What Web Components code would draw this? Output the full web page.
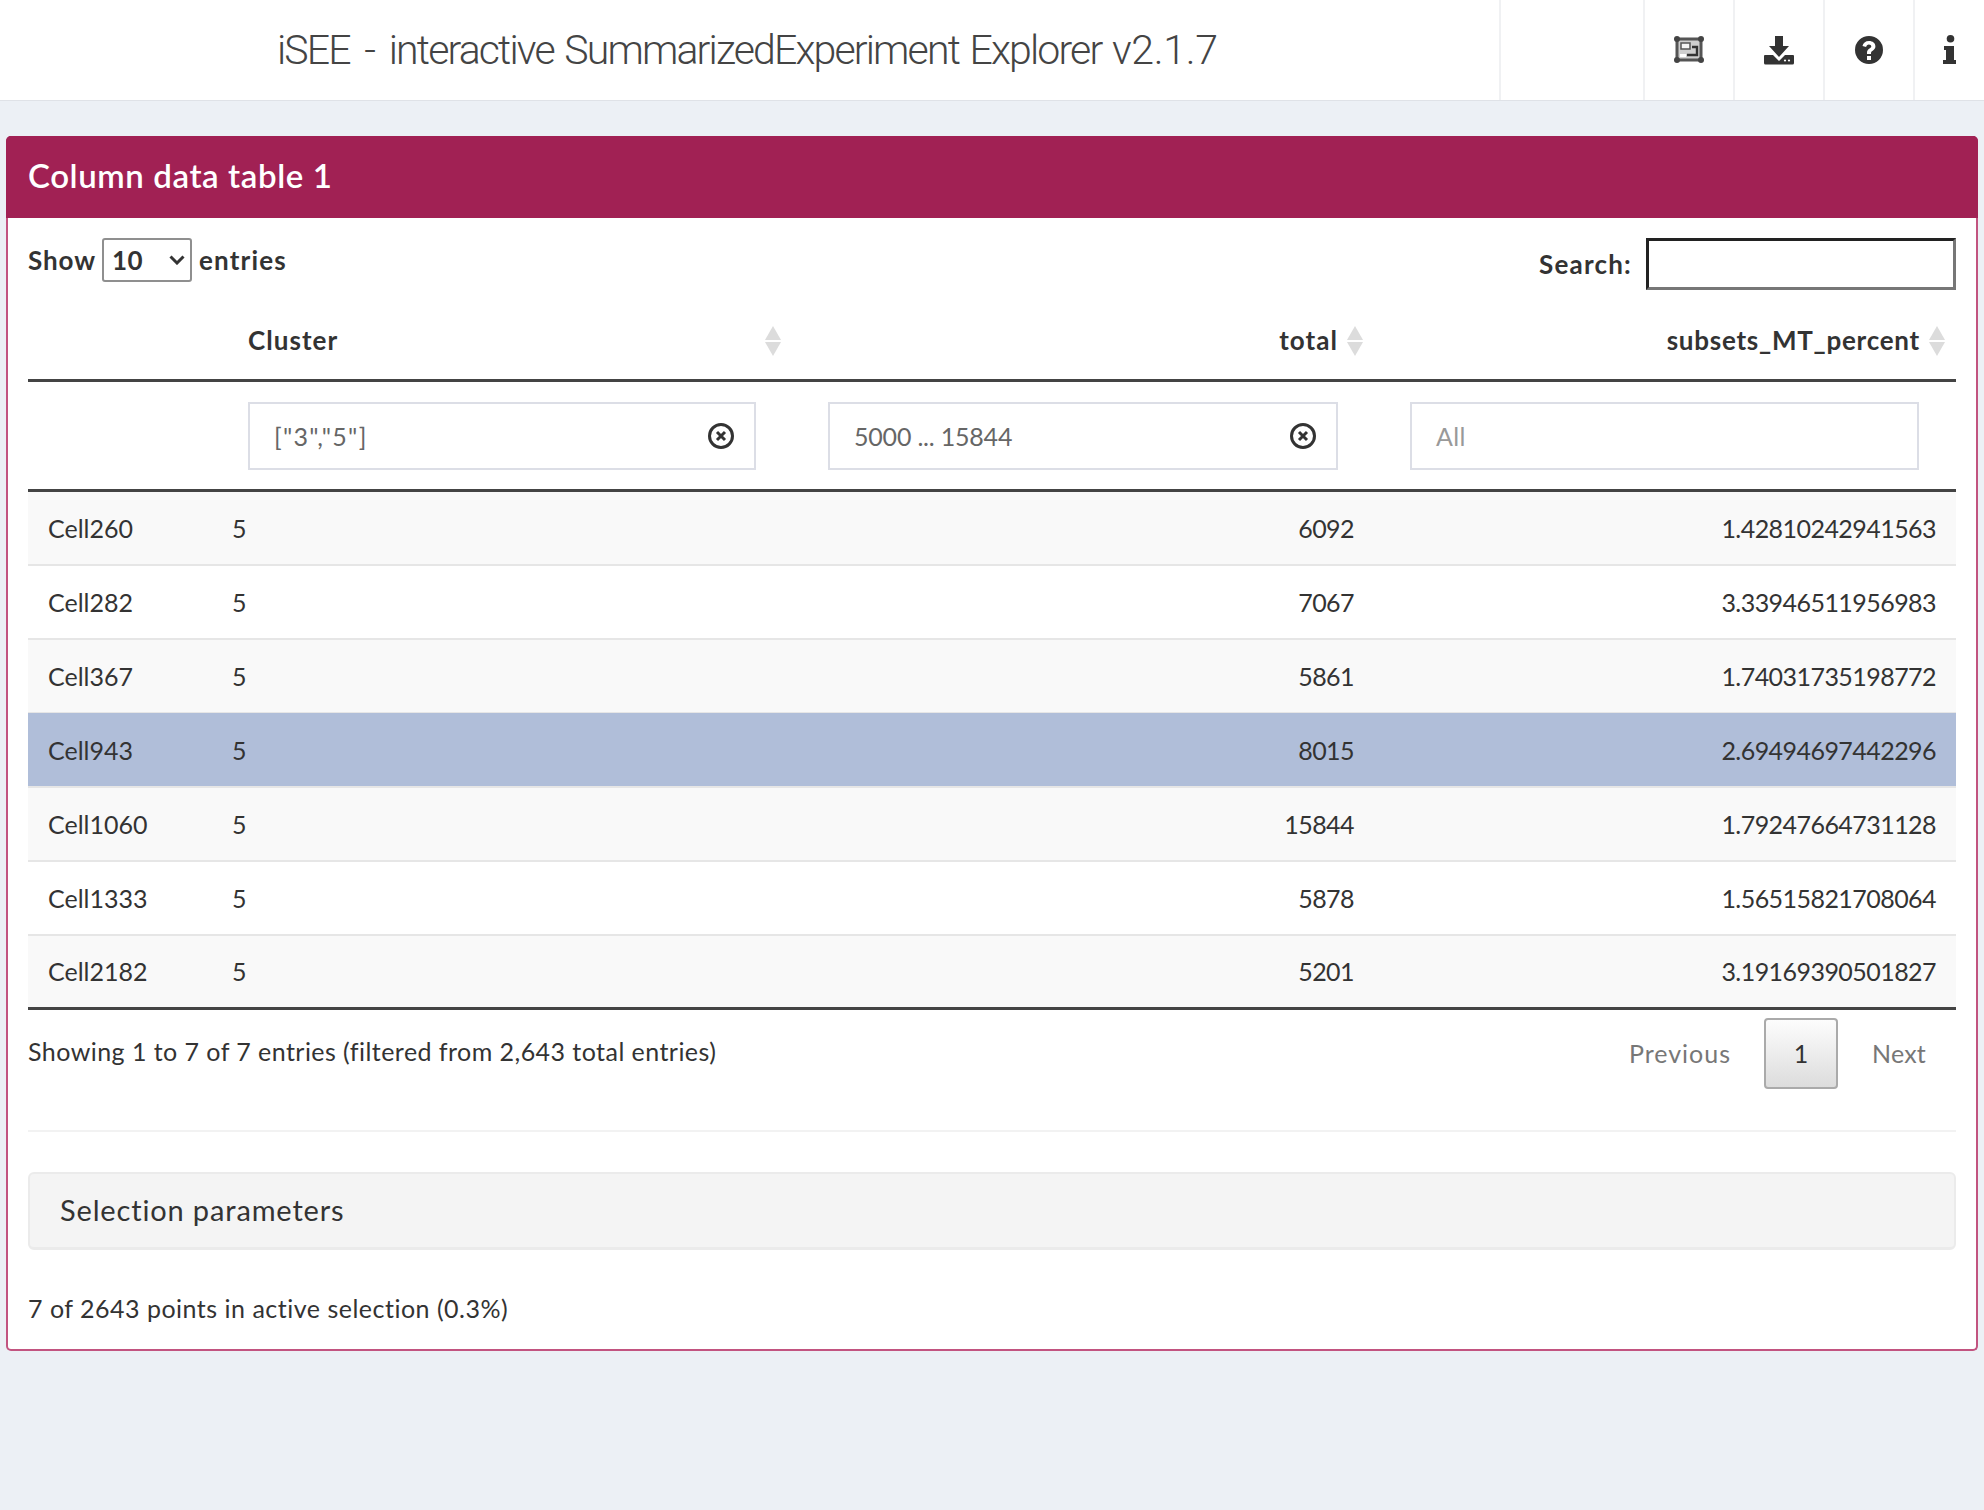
<!DOCTYPE html>
<html>
<head>
<meta charset="utf-8">
<title>iSEE</title>
<style>
  html, body { margin: 0; height: 100%; }
  body { background: #ecf0f5; font-family: "Lato", "Noto Sans", sans-serif; color: #333; }
</style>
</head>
<body>
<isee-header>iSEE <span style="margin:0 4px">-</span> interactive SummarizedExperiment Explorer <span style="letter-spacing:-.3px">v2.1.7</span></isee-header>
<isee-box heading="Column data table 1">
  <dt-controls></dt-controls>
  <dt-table></dt-table>
  <dt-footer></dt-footer>
  <isee-collapse label="Selection parameters"></isee-collapse>
  <p slot="note">7 of 2643 points in active selection (0.3%)</p>
</isee-box>

<script>
const FONT = `"Lato", "Noto Sans", sans-serif`;

// top bar
class IseeHeader extends HTMLElement {
  constructor() {
    super();
    this.attachShadow({ mode: "open" }).innerHTML = `
    <style>
      :host { display: flex; height: 100px; background: #fff; border-bottom: 1px solid #dfe2e7; box-sizing: content-box; }
      .title { flex: 1; padding-left: 277px; font: 300 41px/100px Roboto, sans-serif; letter-spacing: -1.85px; word-spacing: 2.4px; color: #444; white-space: nowrap; }
      .cell { border-left: 2px solid #f0f1f3; box-sizing: border-box; display: flex; align-items: center; justify-content: center; padding-bottom: 1px; }
      svg { display: block; fill: #333; }
    </style>
    <div class="title"><slot></slot></div>
    <div class="cell" style="width:144px"></div>
    <div class="cell" style="width:90px">
      <svg width="30" height="27" viewBox="0 0 30 27">
        <rect x="3" y="3" width="24" height="21" fill="#cfcfcf" stroke="#555" stroke-width="3"/>
        <g fill="#444"><circle cx="3" cy="3" r="3"/><circle cx="27" cy="3" r="3"/><circle cx="3" cy="24" r="3"/><circle cx="27" cy="24" r="3"/></g>
        <path d="M7 7h9v6H7z" fill="#f4f4f4" stroke="#555" stroke-width="1.500"/>
        <path d="M13 19h10v-8h-5" fill="none" stroke="#333" stroke-width="2.400"/>
        <path d="M6 18h6v3H6z" fill="#fff"/>
      </svg>
    </div>
    <div class="cell" style="width:90px">
      <svg width="30" height="30" viewBox="0 0 30 30">
        <path d="M11 1h8v10h6l-10 11L5 11h6z"/>
        <path d="M1 20h8l6 6 6-6h8a1 1 0 0 1 1 1v7a1.500 1.500 0 0 1-1.500 1.500H1.500A1.500 1.500 0 0 1 0 28v-7a1 1 0 0 1 1-1z"/>
        <circle cx="21" cy="25.500" r="1.100" fill="#fff"/><circle cx="25" cy="25.500" r="1.100" fill="#fff"/>
      </svg>
    </div>
    <div class="cell" style="width:90px">
      <svg width="28" height="28" viewBox="0 0 28 28">
        <path fill-rule="evenodd" d="M14 0a14 14 0 1 1 0 28a14 14 0 0 1 0-28zM12 20v4h4v-4zM14 5c-3.600 0-6 2-6.500 5l3.600.9c.4-1.600 1.300-2.500 2.800-2.500 1.400 0 2.400.8 2.400 1.900 0 1-.7 1.500-1.800 2.200-1.500 1-2.500 2-2.500 4.200V18h4v-1c0-1 .5-1.500 1.700-2.300 1.700-1.100 2.700-2.400 2.700-4.400C20.400 7.100 17.700 5 14 5z"/>
      </svg>
    </div>
    <div class="cell" style="width:71px">
      <svg width="14" height="29" viewBox="0 0 14 29">
        <circle cx="7.500" cy="3.800" r="3.800"/>
        <path d="M1 11h10v14h2v4H0v-4h3v-10H1z"/>
      </svg>
    </div>`;
  }
}

// coloured box
class IseeBox extends HTMLElement {
  constructor() {
    super();
    this.attachShadow({ mode: "open" }).innerHTML = `
    <style>
      :host { display: block; margin: 35px 6px 0; background: #fff; border: 2px solid #c25480; border-top-color: #a12154; border-radius: 5px; box-sizing: border-box; height: 1215px; font-family: ${FONT}; }
      .head { background: #a12154; color: #fff; margin: -2px -2px 0; height: 82px; border-radius: 5px 5px 0 0; padding-left: 22px; font: 600 33px/78px ${FONT}; letter-spacing: .6px; }
      .body { padding: 20px 20px 0 20px; }
      ::slotted(p) { margin: 40px 0 0; font-size: 25px; line-height: 36px; letter-spacing: .5px; color: #333; }
    </style>
    <div class="head">${this.getAttribute("heading")}</div>
    <div class="body"><slot></slot><slot name="note"></slot></div>`;
  }
}

// show entries + search
class DtControls extends HTMLElement {
  constructor() {
    super();
    this.attachShadow({ mode: "open" }).innerHTML = `
    <style>
      :host { display: flex; justify-content: space-between; align-items: flex-start; height: 68px; font: 700 26px/44px ${FONT}; color: #333; letter-spacing: 1.2px; }
      .len { display: flex; align-items: center; gap: 6px; }
      .show { letter-spacing: .9px; }
      .sel { width: 90px; height: 44px; box-sizing: border-box; border: 2px solid #8f8f8f; border-radius: 3px; display: flex; align-items: center; justify-content: space-between; padding: 0 5px 0 8px; letter-spacing: .4px; margin-right: 1px; }
      .search { display: flex; align-items: center; gap: 14px; }
      .box { width: 310px; height: 52px; box-sizing: border-box; border: 3px solid; border-color: #222 #777 #777 #222; }
      svg { fill: none; stroke: #333; stroke-width: 3; }
    </style>
    <div class="len"><span class="show">Show</span><div class="sel"><span>10</span><svg width="16" height="10" viewBox="0 0 16 10"><path d="M1.500 1.500 8 8l6.500-6.500"/></svg></div><span>entries</span></div>
    <div class="search"><span>Search:</span><div class="box"></div></div>`;
  }
}

// column head with filter row, and body rows
const ROWS = [
  ["Cell260", "5", "6092", "1.42810242941563"],
  ["Cell282", "5", "7067", "3.33946511956983"],
  ["Cell367", "5", "5861", "1.74031735198772"],
  ["Cell943", "5", "8015", "2.69494697442296"],
  ["Cell1060", "5", "15844", "1.79247664731128"],
  ["Cell1333", "5", "5878", "1.56515821708064"],
  ["Cell2182", "5", "5201", "3.19169390501827"],
];
const SORT = `<svg class="sort" width="18" height="30" viewBox="0 0 18 30"><path d="M9 0l8 14H1z"/><path d="M9 30l8-14H1z"/></svg>`;
const CLEAR = `<svg class="clear" width="28" height="28" viewBox="0 0 28 28"><circle cx="14" cy="14" r="11.500" fill="none" stroke="#333" stroke-width="3"/><path d="M10 10l8 8M18 10l-8 8" stroke="#333" stroke-width="3"/></svg>`;

class DtTable extends HTMLElement {
  constructor() {
    super();
    const rows = ROWS.map((r, i) => `
      <div class="row ${i === 3 ? "sel" : ""} ${i % 2 === 0 ? "odd" : ""}">
        <div class="c0">${r[0]}</div><div class="c1">${r[1]}</div><div class="num c2">${r[2]}</div><div class="num c3">${r[3]}</div>
      </div>`).join("");
    this.attachShadow({ mode: "open" }).innerHTML = `
    <style>
      :host { display: block; font-family: ${FONT}; font-size: 25px; color: #333; letter-spacing: -.55px; }
      .row, .head, .filter { display: grid; grid-template-columns: 188px 580px 582px 578px; align-items: center; }
      .head { height: 73px; border-bottom: 3px solid #444; font-weight: 700; font-size: 26px; letter-spacing: 1.05px; align-items: start; }
      .head > div { display: flex; align-items: center; padding-left: 32px; padding-right: 14px; gap: 8px; height: 70px; }
      .head span { margin-bottom: 2px; }
      .head .r { justify-content: flex-end; }
      .head .l { justify-content: space-between; }
      .head .last { padding-right: 10px; letter-spacing: .75px; }
      .sort { fill: #dcdcdc; flex: none; }
      .filter { height: 110px; border-bottom: 3px solid #444; box-sizing: border-box; }
      .f { height: 68px; box-sizing: border-box; border: 2px solid #dcdee6; margin-left: 32px; display: flex; align-items: center; justify-content: space-between; padding: 0 19px 0 24px; color: #666; }
      .f.ph { color: #999; }
      .row { height: 74px; border-bottom: 2px solid #e6e6e6; box-sizing: border-box; background: #fff; padding-bottom: 1px; }
      .row.odd { background: #f9f9f9; }
      .row.sel { background: #b0bed9; box-shadow: 0 -1px #b0bed9; }
      .row:last-child { border-bottom: 3px solid #444; }
      .c0 { padding-left: 20px; letter-spacing: 0; } .c1 { padding-left: 16px; }
      .num { text-align: right; padding-right: 20px; }
      .c2 { padding-right: 24px; }
    </style>
    <div class="head">
      <div></div>
      <div class="l"><span>Cluster</span>${SORT}</div>
      <div class="r"><span>total</span>${SORT}</div>
      <div class="r last"><span>subsets_MT_percent</span>${SORT}</div>
    </div>
    <div class="filter">
      <div></div>
      <div><div class="f" style="width:508px"><span style="letter-spacing:1.3px">["3","5"]</span>${CLEAR}</div></div>
      <div><div class="f" style="width:510px"><span style="letter-spacing:-.2px">5000 ... 15844</span>${CLEAR}</div></div>
      <div><div class="f ph" style="width:509px"><span style="letter-spacing:.3px">All</span></div></div>
    </div>
    ${rows}`;
  }
}

// info line + paging
class DtFooter extends HTMLElement {
  constructor() {
    super();
    this.attachShadow({ mode: "open" }).innerHTML = `
    <style>
      :host { display: flex; justify-content: space-between; align-items: flex-start; height: 120px; border-bottom: 2px solid #f2f2f2; box-sizing: content-box; font: 400 25px/36px ${FONT}; letter-spacing: .45px; color: #333; }
      .info { margin-top: 23px; }
      .pages { display: flex; align-items: center; margin-top: 8px; margin-right: 30px; color: #777; letter-spacing: .2px; }
      .pages span { margin-bottom: 2px; }
      .prev { letter-spacing: 1px; }
      .one { width: 74px; height: 71px; box-sizing: border-box; border: 2px solid #aaa; border-radius: 4px; margin: 0 34px 0 33px; color: #333; background: linear-gradient(#fdfdfd, #dcdcdc); display: flex; align-items: center; justify-content: center; padding-bottom: 2px; }
    </style>
    <div class="info">Showing 1 to 7 of 7 entries (filtered from 2,643 total entries)</div>
    <div class="pages"><span class="prev">Previous</span><div class="one">1</div><span>Next</span></div>`;
  }
}

class IseeCollapse extends HTMLElement {
  constructor() {
    super();
    this.attachShadow({ mode: "open" }).innerHTML = `
    <style>
      :host { display: block; margin-top: 40px; height: 78px; box-sizing: border-box; background: #f4f4f4; border: 2px solid #ebebeb; border-bottom-width: 3px; border-radius: 6px; padding-left: 30px; font: 400 29px/72px ${FONT}; letter-spacing: .85px; color: #333; }
    </style>
    ${this.getAttribute("label")}`;
  }
}

customElements.define("isee-header", IseeHeader);
customElements.define("isee-box", IseeBox);
customElements.define("dt-controls", DtControls);
customElements.define("dt-table", DtTable);
customElements.define("dt-footer", DtFooter);
customElements.define("isee-collapse", IseeCollapse);
</script>
</body>
</html>
